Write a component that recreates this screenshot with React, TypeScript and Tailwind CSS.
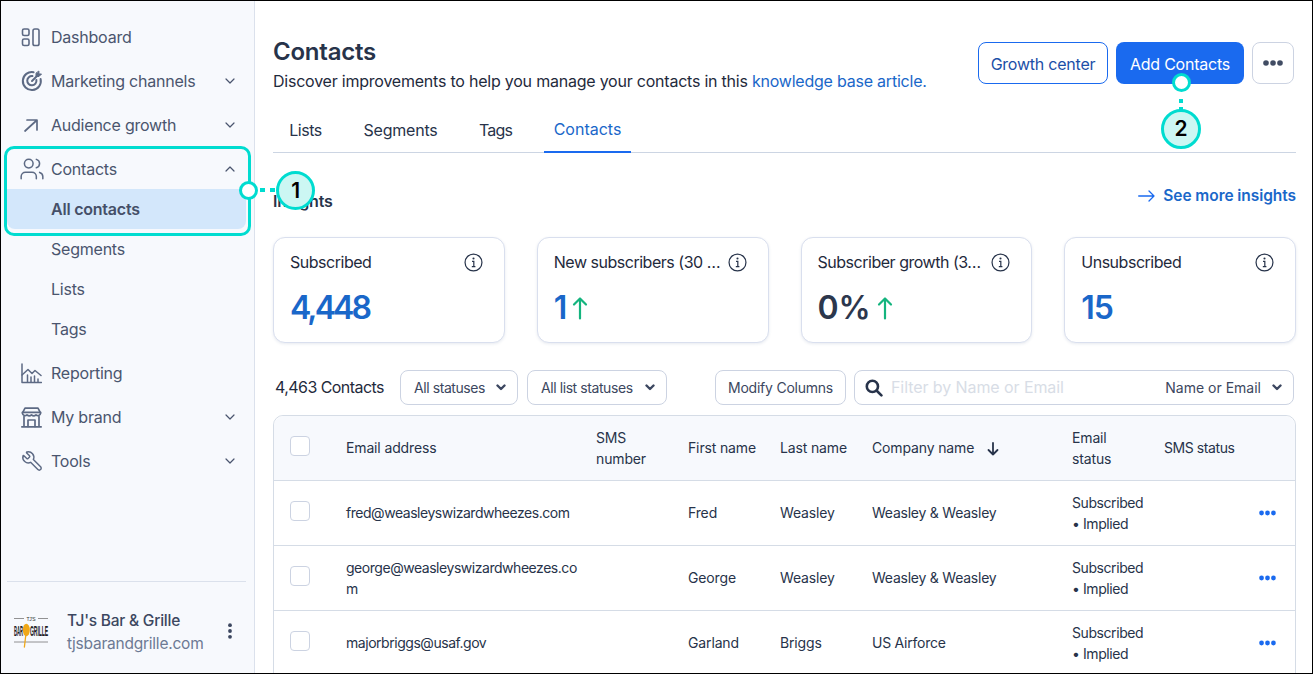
import React from "react";
import { ChevronDown, ChevronUp, Users, Wrench } from "lucide-react";

const S = { fill: "none", stroke: "currentColor", strokeWidth: 1.6, strokeLinecap: "round" as const, strokeLinejoin: "round" as const };

const DashIcon = () => (
  <svg width="20" height="20" viewBox="0 0 20 20" {...S}>
    <rect x="1.5" y="2" width="6.5" height="6.5" rx="1.6" />
    <rect x="1.5" y="12" width="6.5" height="6.5" rx="1.6" />
    <rect x="12" y="2" width="6" height="16.5" rx="1.8" />
  </svg>
);
const TargetIcon = () => (
  <svg width="22" height="22" viewBox="0 0 22 22" {...S} strokeWidth={2}>
    <path d="M19.6 9a9 9 0 1 1-7-6.8" />
    <path d="M15.4 10a4.6 4.6 0 1 1-4-3.9" />
    <path d="M11 11l5-5" />
    <path d="M15 3.5v3h3l2.5-2.5h-2.6V1.4z" fill="currentColor" strokeWidth={1} />
  </svg>
);
const GrowthIcon = () => (
  <svg width="20" height="20" viewBox="0 0 20 20" {...S} strokeWidth={1.7}>
    <path d="M4 16L15.5 5.5M6 5h10v10" />
  </svg>
);
const ReportIcon = () => (
  <svg width="21" height="21" viewBox="0 0 21 21" {...S} strokeWidth={1.5}>
    <path d="M1 1v18.5h19.5" />
    <path d="M1 12L7 6.5l4 4 3-3 6 5" />
    <path d="M6.5 19v-7M10 19v-5M13.5 19v-6M17 19v-3" />
  </svg>
);
const StoreIcon = () => (
  <svg width="21" height="21" viewBox="0 0 21 21" {...S} strokeWidth={1.7}>
    <path d="M4 1.2h13l2.6 5a2.7 2.7 0 0 1-4.6 1.6 3.2 3.2 0 0 1-4.5 0 3.2 3.2 0 0 1-4.5 0A2.7 2.7 0 0 1 1.4 6.2z" />
    <path d="M1.4 5.4h18.2" />
    <path d="M3 9.5v10M18 9.5v10M0.8 19.8h19.4" />
    <path d="M7 19.5v-6.5h7v6.5" />
  </svg>
);
const Info = () => (
  <svg width="19" height="19" viewBox="0 0 18 18" fill="none" stroke="#27334a" strokeWidth="1.15" className="shrink-0">
    <circle cx="9" cy="9" r="8" />
    <path d="M7.6 8h1.7v5M7.4 13h3.4" />
    <circle cx="9" cy="5.2" r="1" fill="#27334a" stroke="none" />
  </svg>
);
const Caret = () => (
  <svg width="10" height="7" viewBox="0 0 10 7" fill="none" stroke="currentColor" strokeWidth="2.4" strokeLinecap="round" strokeLinejoin="round">
    <path d="M1.5 1.5L5 5l3.5-3.5" />
  </svg>
);
const Dots = ({ color, w = 20 }: { color: string; w?: number }) => (
  <svg width={w} height="6" viewBox="0 0 20 6" fill={color}>
    <circle cx="3" cy="3" r="2.8" />
    <circle cx="10" cy="3" r="2.8" />
    <circle cx="17" cy="3" r="2.8" />
  </svg>
);
const UpArrow = () => (
  <svg width="16" height="24" viewBox="0 0 16 24" fill="none" strokeWidth="2.2" strokeLinecap="round" strokeLinejoin="round">
    <path d="M8 22.5V2.5M2 8.5l6-6 6 6" stroke="#14b47e" />
  </svg>
);

const Logo = () => (
  <svg width="36" height="34" viewBox="0 0 36 34" className="mt-[8px] shrink-0">
    <path d="M1 3.5h10M25 3.5h10M1 27h34" stroke="#777" strokeWidth="0.8" />
    <text x="18" y="5.5" fontSize="5" textAnchor="middle" fill="#333" fontFamily="'Liberation Sans',sans-serif">TJ'S</text>
    <text x="1" y="21" fontSize="15" fill="#222" fontWeight="700" textLength="9" lengthAdjust="spacingAndGlyphs" fontFamily="'Liberation Sans',sans-serif">BAR</text>
    <text x="17" y="21" fontSize="15" fill="#222" fontWeight="700" textLength="18" lengthAdjust="spacingAndGlyphs" fontFamily="'Liberation Sans',sans-serif">GRILLE</text>
    <ellipse cx="13.3" cy="15" rx="3.5" ry="6.2" fill="#f0a818" />
    <path d="M12.8 20l-1.4 12" stroke="#f0a818" strokeWidth="1.3" strokeLinecap="round" />
  </svg>
);

const NavItem = ({ icon, label, chev, up, active, extra = "" }: { icon?: React.ReactNode; label: string; chev?: boolean; up?: boolean; active?: boolean; extra?: string }) => (
  <div className={(active ? "ml-[6px] mr-[8px] flex h-[40px] items-center rounded-b-lg bg-[#d3e7fb] pl-[44px] font-semibold text-[#454f68]" : icon ? "ml-[6px] mr-[8px] flex h-[44px] items-center pl-[14px] pr-[8px] text-[#4a556e]" : "ml-[6px] mr-[8px] flex h-[40px] items-center pl-[44px] text-[#4a556e]") + " " + extra}>
    {icon && <span className="mr-[8px] flex w-[22px] shrink-0 justify-start text-[#5d6a84]">{icon}</span>}
    <span>{label}</span>
    {chev && <ChevronDown size={16} strokeWidth={1.8} className="ml-auto text-[#4a556e]" />}
    {up && <ChevronUp size={16} strokeWidth={1.8} className="ml-auto text-[#4a556e]" />}
  </div>
);

const Sidebar = () => (
  <aside className="flex w-[254px] shrink-0 flex-col border-r border-[#dbe1ec] bg-[#f7f9fd] pt-[14px] text-[16px]">
    <NavItem icon={<DashIcon />} label="Dashboard" />
    <NavItem icon={<TargetIcon />} label="Marketing channels" chev />
    <NavItem icon={<GrowthIcon />} label="Audience growth" chev />
    <NavItem icon={<Users size={26} strokeWidth={1.4} className="-ml-[2px] shrink-0" />} label="Contacts" up extra="!h-[42px] pt-[2px]" />
    <NavItem label="All contacts" active />
    <NavItem label="Segments" />
    <NavItem label="Lists" />
    <NavItem label="Tags" extra="mb-[2px]" />
    <NavItem icon={<ReportIcon />} label="Reporting" />
    <NavItem icon={<StoreIcon />} label="My brand" chev />
    <NavItem icon={<Wrench size={22} strokeWidth={1.6} className="-scale-x-100" />} label="Tools" chev />
    <div className="ml-[6px] mr-[8px] mt-auto flex h-[92px] items-center border-t border-[#dbe1ec] pl-[6px] pr-[13px]">
      <Logo />
      <div className="ml-[18px] flex flex-col pt-[8px]">
        <span className="text-[15.5px] font-medium leading-[23px] text-[#3c4760]">TJ's Bar &amp; Grille</span>
        <span className="text-[15.5px] leading-[23px] text-[#6d7a94]">tjsbarandgrille.com</span>
      </div>
      <svg width="6" height="16" viewBox="0 0 6 16" fill="#3c4760" className="ml-auto mt-[6px]">
        <circle cx="3" cy="2.2" r="1.9" />
        <circle cx="3" cy="8" r="1.9" />
        <circle cx="3" cy="13.8" r="1.9" />
      </svg>
    </div>
  </aside>
);

const Card = ({ title, value, arrow, dark, tight }: { title: string; value: string; arrow?: boolean; dark?: boolean; tight?: boolean }) => (
  <div className="h-[106px] rounded-[12px] border border-[#d9dfee] bg-white pl-[16px] pr-[21px] pt-[12px] shadow-[0_1px_3px_rgba(60,80,130,0.12)]">
    <div className="flex h-[24px] items-center justify-between gap-[6px] whitespace-nowrap text-[16px] tracking-[-0.03em] text-[#1f2a3c]">
      <span>{title}</span>
      <Info />
    </div>
    <div className={(dark ? "text-[#2c374d]" : "text-[#1a67c9]") + " mt-[14px] flex h-[40px] items-center gap-[6px] text-[32px] font-semibold"}>
      <span className={tight ? "tracking-[-0.09em]" : dark ? "tracking-normal" : "tracking-[-0.03em]"}>{value}</span>
      {arrow && <UpArrow />}
    </div>
  </div>
);

const Select = ({ label, w }: { label: string; w: string }) => (
  <div className={`flex h-[35px] items-center justify-between rounded-[8px] border border-[#ccd3e2] bg-white pl-[13px] pr-[11px] text-[14px] tracking-[-0.03em] text-[#3c4760] ${w}`}>
    <span>{label}</span>
    <Caret />
  </div>
);

const COLS = "grid grid-cols-[72px_250px_92px_92px_92px_200px_92px_1fr] items-center";

const Check = () => <div className="mb-[4px] ml-[16px] h-[20px] w-[20px] rounded-[4px] border border-[#ccd3e2] bg-white" />;

const rows = [
  { email: <>fred@weasleyswizardwheezes.com</>, first: "Fred", last: "Weasley", co: "Weasley & Weasley" },
  { email: <>george@weasleyswizardwheezes.co<br />m</>, first: "George", last: "Weasley", co: "Weasley & Weasley" },
  { email: <>majorbriggs@usaf.gov</>, first: "Garland", last: "Briggs", co: "US Airforce" },
];

export default function App() {
  return (
    <div className="relative flex h-[674px] w-[1313px] overflow-hidden border border-black bg-white font-[Inter,sans-serif] tracking-[-0.014em]">
      <Sidebar />
      <main className="min-w-0 flex-1 pl-[18px] pr-[16px]">
        <header className="flex justify-between pt-[37px]">
          <div>
            <h1 className="text-[24px] font-semibold leading-[28px] text-[#27334a]">Contacts</h1>
            <p className="mt-[3px] text-[16px] leading-[24px] text-[#1f2a3c]">
              Discover improvements to help you manage your contacts in this{" "}
              <span className="text-[#1a67c9]">knowledge base article.</span>
            </p>
          </div>
          <div className="mr-[2px] mt-[4px] flex gap-[8px] text-[16px]">
            <div className="flex h-[42px] w-[130px] items-center justify-center rounded-[8px] border border-[#1a6aef] pt-[2px] text-[#1c4fa8]">Growth center</div>
            <div className="flex h-[42px] w-[128px] items-center justify-center rounded-[8px] bg-[#1a6aef] pt-[2px] text-white">Add Contacts</div>
            <div className="flex h-[42px] w-[42px] items-center justify-center rounded-[8px] border border-[#ccd3e2]"><Dots color="#414c63" /></div>
          </div>
        </header>

        <nav className="mt-[15px] flex h-[45px] gap-[20px] border-b border-[#ccd5e3] pl-[5px] text-[16px] text-[#27334a]">
          <div className="flex w-[55px] items-center justify-center tracking-[-0.03em]">Lists</div>
          <div className="flex w-[95px] items-center justify-center">Segments</div>
          <div className="flex w-[55px] items-center justify-center tracking-[-0.05em]">Tags</div>
          <div className="-mb-px ml-[1px] flex w-[87px] items-center justify-center border-b-2 border-[#1a6aef] pb-[2px] tracking-normal text-[#1a67c9]">Contacts</div>
        </nav>

        <div className="mt-[30px] flex h-[54px] items-start justify-between">
          <h2 className="mt-[6px] text-[16px] font-semibold leading-[24px] text-[#27334a]">Insights</h2>
          <div className="flex h-[24px] items-center gap-[8px] pt-[1px] text-[15.5px] font-semibold tracking-[-0.004em] text-[#1a67c9]">
            <svg width="17" height="12" viewBox="0 0 17 12" fill="none" stroke="#1a6aef" strokeWidth="1.3" strokeLinecap="round" strokeLinejoin="round">
              <path d="M0.7 6H16M11 1l5 5-5 5" />
            </svg>
            See more insights
          </div>
        </div>

        <section className="grid grid-cols-4 gap-[32px]">
          <Card title="Subscribed" value="4,448" tight />
          <Card title="New subscribers (30 …" value="1" arrow />
          <Card title="Subscriber growth (3…" value="0%" arrow dark />
          <Card title="Unsubscribed" value="15" />
        </section>

        <div className="mt-[27px] flex h-[35px] items-center pl-[2px]">
          <span className="w-[125px] pb-[2px] text-[16px] tracking-[-0.035em] text-[#1f2a3c]">4,463 Contacts</span>
          <Select label="All statuses" w="w-[118px]" />
          <div className="ml-[9px]"><Select label="All list statuses" w="w-[140px]" /></div>
          <div className="ml-[48px] flex h-[35px] w-[131px] items-center justify-center rounded-[8px] border border-[#ccd3e2] text-[14px] text-[#3c4760]">Modify Columns</div>
          <div className="ml-[8px] flex h-[35px] w-[440px] items-center rounded-[8px] border border-[#ccd3e2] pl-[10px] pr-[11px]">
            <svg width="18" height="18" viewBox="0 0 18 18" fill="none" stroke="#27334a" strokeWidth="2.6" strokeLinecap="round">
              <circle cx="7.4" cy="7.4" r="5.6" />
              <path d="M12 12l4.4 4.4" />
            </svg>
            <span className="ml-[8px] pb-[2px] text-[16px] tracking-[-0.005em] text-[#d8dde6]">Filter by Name or Email</span>
            <span className="ml-auto mr-[11px] text-[14px] tracking-normal text-[#3c4760]">Name or Email</span>
            <span className="text-[#3c4760]"><Caret /></span>
          </div>
        </div>

        <section className="mt-[10px] rounded-t-[10px] border border-[#d5dce6] text-[14px] leading-[21px] tracking-[-0.01em] text-[#27334a]">
          <div className={`${COLS} h-[65px] rounded-t-[10px] border-b border-[#d5dce6] bg-[#f7f9fd]`}>
            <Check />
            <span className="pb-[2px]">Email address</span>
            <span>SMS<br />number</span>
            <span className="pb-[2px]">First name</span>
            <span className="pb-[2px]">Last name</span>
            <span className="flex items-center gap-[13px] pb-[2px]">Company name
              <svg width="12" height="14" viewBox="0 0 12 14" fill="none" stroke="#27334a" strokeWidth="1.8" strokeLinecap="round" strokeLinejoin="round" className="mt-[3px]">
                <path d="M6 1v11.5M1.5 8L6 12.5 10.5 8" />
              </svg>
            </span>
            <span>Email<br />status</span>
            <span className="pb-[2px] tracking-[-0.03em]">SMS status</span>
          </div>
          {rows.map((r, i) => (
            <div key={i} className={`${COLS} h-[65px] border-b border-[#d5dce6]`}>
              <Check />
              <span className={i === 1 ? "tracking-[-0.033em]" : "pb-[2px] tracking-[-0.033em]"}>{r.email}</span>
              <span />
              <span className="pb-[2px]">{r.first}</span>
              <span className="pb-[2px]">{r.last}</span>
              <span className="pb-[2px] tracking-[-0.017em]">{r.co}</span>
              <span className="tracking-[-0.03em]">Subscribed<br />• Implied</span>
              <span className="flex justify-end pr-[19px]"><Dots color="#1a6aef" w={17} /></span>
            </div>
          ))}
        </section>
      </main>

      {/* annotation callouts */}
      <div className="pointer-events-none absolute left-[3px] top-[145px] h-[90px] w-[247px] rounded-[10px] border-[3px] border-[#00dcd0]" />
      <div className="absolute left-[238px] top-[180px] h-[19px] w-[19px] rounded-full border-[3px] border-[#00dcd0] bg-white" />
      <div className="absolute left-[259px] top-[187px] flex gap-[5px]">
        <span className="h-[4px] w-[5px] bg-[#00dcd0]" />
        <span className="h-[4px] w-[5px] bg-[#00dcd0]" />
      </div>
      <div className="absolute left-[275px] top-[170px] flex h-[39px] w-[39px] items-center justify-center rounded-full border-[3px] border-[#00dcd0] bg-[#ccf7f3] text-[21px] font-semibold text-black">1</div>
      <div className="absolute left-[1171px] top-[72px] h-[19px] w-[19px] rounded-full border-[3px] border-[#00dcd0] bg-white" />
      <div className="absolute left-[1178px] top-[98px] flex flex-col gap-[4px]">
        <span className="h-[4px] w-[4px] bg-[#00dcd0]" />
        <span className="h-[3px] w-[4px] bg-[#00dcd0]" />
      </div>
      <div className="absolute left-[1160px] top-[108px] flex h-[40px] w-[40px] items-center justify-center rounded-full border-[3px] border-[#00dcd0] bg-[#ccf7f3] text-[21px] font-semibold text-black">2</div>
    </div>
  );
}
